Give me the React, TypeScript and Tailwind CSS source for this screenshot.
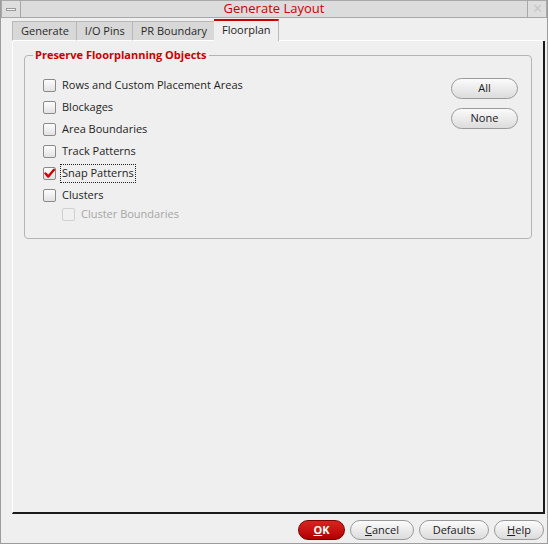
import React, { useState } from 'react';

// Floorplan tab of the "Generate Layout" dialog
const tabs = ['Generate', 'I/O Pins', 'PR Boundary', 'Floorplan'];

const options = [
    'Rows and Custom Placement Areas',
    'Blockages',
    'Area Boundaries',
    'Track Patterns',
    'Snap Patterns',
    'Clusters',
];

const CheckBox = ({ checked, disabled }: { checked: boolean; disabled?: boolean }) => (
    <span
        className={`relative inline-block w-[13px] h-[13px] rounded-[2px] border ${disabled ? 'border-[#d0d0d0] bg-[#f0f0f0]' : 'border-[#8a8a8a] bg-gradient-to-b from-[#fdfdfd] to-[#e2e2e2]'}`}
    >
        {checked && (
            <svg viewBox="0 0 13 13" className="absolute -left-px -top-px w-[13px] h-[13px]">
                <path d="M2.5 6.5 L5.3 9.6 L11 2.8" fill="none" stroke="#d00000" strokeWidth="2.4" strokeLinecap="round" strokeLinejoin="round" />
            </svg>
        )}
    </span>
);

const PillButton = ({ children, className = '' }: { children: React.ReactNode; className?: string }) => (
    <button
        type="button"
        className={`h-[21px] rounded-full border border-[#9a9a9a] bg-gradient-to-b from-[#fbfbfb] to-[#dcdcdc] text-[11px] text-[#202020] ${className}`}
    >
        {children}
    </button>
);

const App = () => {
    const [checked, setChecked] = useState<Record<string, boolean>>({ 'Snap Patterns': true });

    return (
        <div className="w-[548px] h-[544px] flex flex-col bg-[#efefef] border border-t-0 border-[#9c9c9c] font-['Open_Sans',sans-serif] text-[11px] text-[#1e1e1e]">
            {/* Title bar */}
            <div className="flex h-[18px] shrink-0">
                <div className="w-[20px] flex items-center justify-center border border-[#a8a8a8] bg-[#dedede]">
                    <span className="block w-[10px] h-[3px] border border-[#9a9a9a] bg-[#f4f4f4]" />
                </div>
                <div className="flex-1 flex items-center justify-center border-y border-[#a8a8a8] bg-[#dcdcdc] text-[13px] text-[#cc0000]">
                    Generate Layout
                </div>
                <div className="w-[20px] flex items-center justify-center border border-[#a8a8a8] bg-[#dedede] text-[13px] text-[#c8c8c8]">
                    ✕
                </div>
            </div>

            {/* Tabs */}
            <div className="flex h-[23px] shrink-0 pl-[11px] pt-[1px]">
                {tabs.map(t =>
                    t === 'Floorplan' ? (
                        <div key={t} className="flex items-center pl-[8px] pr-[7px] pb-px border-t-2 border-t-[#cc0000] border-r border-r-[#b8b8b8] bg-[#efefef] text-[#1e1e1e]">
                            {t}
                        </div>
                    ) : (
                        <div key={t} className="flex items-center mt-[2px] pl-[8px] pr-[7px] border-l border-t border-[#b8b8b8] border-b border-b-white bg-[#d8d8d8] text-[#2a2a2a]">
                            {t}
                        </div>
                    )
                )}
                <div className="flex-1 border-b border-white mr-[3px]" />
            </div>

            {/* Tab page */}
            <div className="ml-[11px] mr-[2px] h-[473px] shrink-0 border-l border-l-white border-r-2 border-r-[#1a1a1a] border-b-2 border-b-[#1a1a1a] pt-[6px] px-[11px]">
                <fieldset className="flex rounded-[4px] border border-[#b4b4b4] h-[192px] pl-[18px] pr-[13px] pt-[11px]">
                    <legend className="-ml-[10px] px-[2px] font-bold text-[#cc0000]">Preserve Floorplanning Objects</legend>
                    <div className="flex-1 flex flex-col">
                        {options.map(o => (
                            <label key={o} className="flex items-center h-[22px] gap-[5px]">
                                <CheckBox checked={!!checked[o]} />
                                <span
                                    className={checked[o] ? 'outline outline-1 outline-dotted outline-[#222] px-px' : 'px-px'}
                                    onClick={() => setChecked(c => ({ ...c, [o]: !c[o] }))}
                                >
                                    {o}
                                </span>
                            </label>
                        ))}
                        <div className="flex items-center h-[16px] gap-[5px] pl-[19px] text-[#a6a6a6]">
                            <CheckBox checked={false} disabled />
                            <span className="px-px">Cluster Boundaries</span>
                        </div>
                    </div>
                    <div className="flex flex-col gap-[9px] pt-[3px]">
                        <PillButton className="w-[67px]">All</PillButton>
                        <PillButton className="w-[67px]">None</PillButton>
                    </div>
                </fieldset>
            </div>

            {/* Footer buttons */}
            <div className="flex justify-end items-start gap-[5px] pt-[6px] pr-[3px]">
                <button type="button" className="h-[20px] w-[47px] rounded-full border border-[#7a0000] bg-gradient-to-b from-[#e02020] to-[#b00000] text-[11px] font-bold text-white">
                    <span className="underline">O</span>K
                </button>
                <PillButton className="w-[64px] !h-[20px]">
                    <span className="underline">C</span>ancel
                </PillButton>
                <PillButton className="w-[70px] !h-[20px]">Defaults</PillButton>
                <PillButton className="w-[50px] !h-[20px]">
                    <span className="underline">H</span>elp
                </PillButton>
            </div>
        </div>
    );
};

export default App;
